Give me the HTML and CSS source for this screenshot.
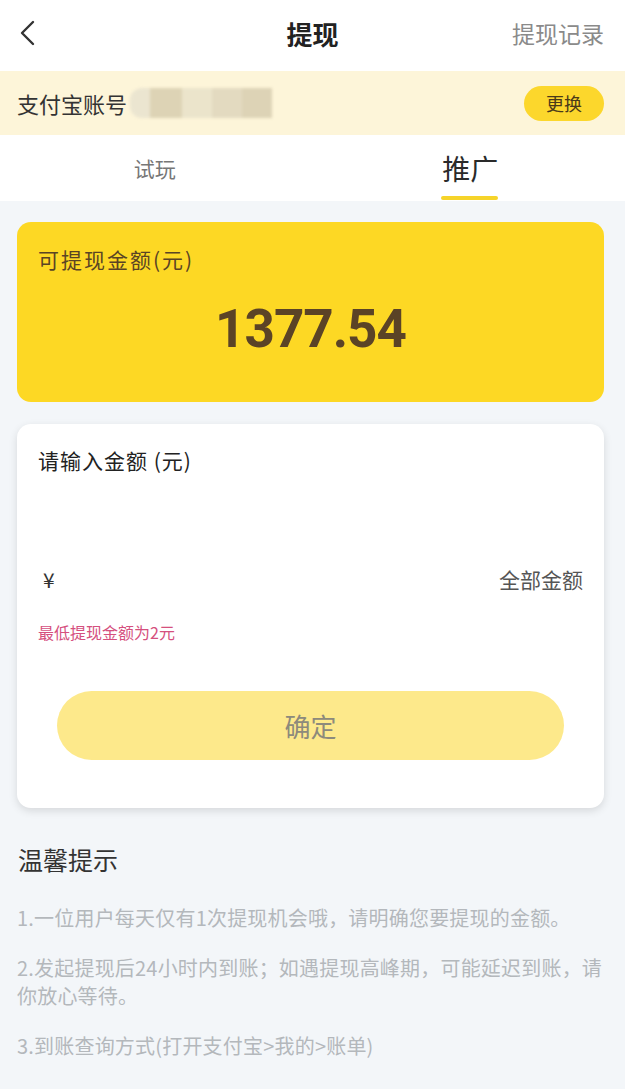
FILE: index.html
```html
<!DOCTYPE html>
<html lang="zh-CN">
<head>
    <meta charset="UTF-8">
    <meta name="viewport" content="width=device-width, initial-scale=1.0">
    <title>提现</title>
    <link rel="stylesheet" href="styles.css">
</head>
<body>

<header class="topbar">
    <a href="#" class="back">
        <svg width="18" height="28" viewBox="0 0 18 28"><path d="M15 3 L4 14 L15 25" fill="none" stroke="#333" stroke-width="2.4" stroke-linecap="round" stroke-linejoin="round"/></svg>
    </a>
    <h1>提现</h1>
    <a href="#" class="record">提现记录</a>
</header>

<div class="account">
    <div class="account-info">
        <span>支付宝账号</span>
        <span class="masked">
            <i class="m1"></i><i class="m2"></i><i class="m3"></i><i class="m4"></i><i class="m5"></i>
        </span>
    </div>
    <button class="change">更换</button>
</div>

<nav class="tabs">
    <a href="#" class="trial">试玩</a>
    <a href="#" class="active">推广</a>
</nav>

<main>
    <section class="balance">
        <p class="balance-label">可提现金额(元)</p>
        <p class="balance-amount">1377.54</p>
    </section>

    <section class="withdraw">
        <p class="withdraw-title">请输入金额 (元)</p>
        <div class="amount-row">
            <span class="yen">¥</span>
            <input type="text" class="amount-input">
            <a href="#" class="all">全部金额</a>
        </div>
        <p class="min-tip">最低提现金额为2元</p>
        <button class="confirm">确定</button>
    </section>

    <section class="tips">
        <h2>温馨提示</h2>
        <p>1.一位用户每天仅有1次提现机会哦，请明确您要提现的金额。</p>
        <p>2.发起提现后24小时内到账；如遇提现高峰期，可能延迟到账，请你放心等待。</p>
        <p>3.到账查询方式(打开支付宝&gt;我的&gt;账单)</p>
    </section>
</main>

</body>
</html>
```

FILE: styles.css
```css
body {
    margin: 0;
    padding: 0;
    background-color: #f3f6f9;
    font-family: "Noto Sans CJK SC", "Noto Sans", sans-serif;
    color: #333;
}

.topbar {
    height: 66px;
    background-color: white;
    display: flex;
    align-items: center;
    justify-content: space-between;
    padding: 0 21px 5px 18px;
    position: relative;
}

.back {
    display: flex;
    width: 90px;
}

.topbar h1 {
    margin: 0;
    font-size: 26px;
    font-weight: bold;
    color: #222;
    position: absolute;
    left: 0;
    right: 0;
    text-align: center;
    pointer-events: none;
}

.record {
    color: #8a8a8a;
    font-size: 23px;
    text-decoration: none;
}

.account {
    height: 64px;
    background-color: #fdf5d9;
    display: flex;
    align-items: center;
    justify-content: space-between;
    padding: 0 21px 0 17px;
}

.account-info {
    display: flex;
    align-items: center;
    font-size: 22px;
    color: #333;
}

.masked {
    display: flex;
    height: 30px;
    margin-left: 3px;
    filter: blur(1.5px);
}

.masked i {
    display: block;
    height: 30px;
}

.m1 { width: 20px; background-color: #ebe5d0; border-radius: 12px 0 0 12px; }
.m2 { width: 32px; background-color: #ddd3b5; }
.m3 { width: 30px; background-color: #ebe4cb; }
.m4 { width: 30px; background-color: #e3dac0; }
.m5 { width: 30px; background-color: #ddd3b6; }

.change {
    width: 80px;
    height: 35px;
    border: none;
    border-radius: 18px;
    background-color: #fcd72c;
    color: #4a3a1a;
    font-family: inherit;
    font-size: 18px;
    padding: 0;
}

.tabs {
    height: 66px;
    background-color: white;
    display: flex;
}

.tabs a {
    flex: 1;
    display: flex;
    align-items: center;
    justify-content: center;
    color: #777;
    font-size: 21px;
    text-decoration: none;
    position: relative;
}

.tabs a.trial {
    padding-right: 6px;
}

.tabs a.active {
    font-size: 28px;
    color: #2a2a2a;
}

.tabs a.active::after {
    content: "";
    position: absolute;
    bottom: 1px;
    left: 50%;
    width: 57px;
    margin-left: -29px;
    height: 4px;
    border-radius: 2px;
    background-color: #f6d42a;
}

main {
    padding: 21px 21px 30px 17px;
}

.balance {
    height: 180px;
    box-sizing: border-box;
    background-color: #fdd824;
    border-radius: 14px;
    padding: 22px 21px;
}

.balance-label {
    margin: 0;
    font-size: 21px;
    letter-spacing: 2px;
    color: #5a4424;
}

.balance-amount {
    margin: 24px 0 0;
    text-align: center;
    font-family: Roboto, "Noto Sans", sans-serif;
    font-weight: bold;
    font-size: 53px;
    letter-spacing: -1px;
    color: #5b4326;
}

.withdraw {
    margin-top: 22px;
    height: 384px;
    box-sizing: border-box;
    background-color: white;
    border-radius: 14px;
    box-shadow: 0 3px 8px rgba(0, 0, 0, 0.12);
    padding: 21px 21px 0;
}

.withdraw-title {
    margin: 0;
    font-size: 21px;
    letter-spacing: 1px;
    color: #222;
}

.amount-row {
    margin-top: 89px;
    display: flex;
    align-items: center;
}

.yen {
    font-size: 21px;
    color: #333;
    padding-left: 5px;
}

.amount-input {
    flex: 1;
    border: none;
    outline: none;
    font-size: 20px;
    min-width: 0;
}

.all {
    color: #555;
    font-size: 21px;
    text-decoration: none;
}

.min-tip {
    margin: 26px 0 0;
    font-size: 16px;
    color: #d5507e;
}

.confirm {
    display: block;
    margin: 47px auto 0;
    width: 507px;
    height: 69px;
    border: none;
    border-radius: 35px;
    background-color: #fde98b;
    color: #8d8a7c;
    font-family: inherit;
    font-size: 26px;
}

.tips {
    padding-top: 33px;
    margin-right: -8px;
}

.tips h2 {
    margin: 0 0 27px 1px;
    font-size: 25px;
    font-weight: normal;
    color: #333;
}

.tips p {
    margin: 0 0 22px;
    font-size: 20px;
    letter-spacing: 0.2px;
    line-height: 28px;
    color: #b4b8bc;
}
```
